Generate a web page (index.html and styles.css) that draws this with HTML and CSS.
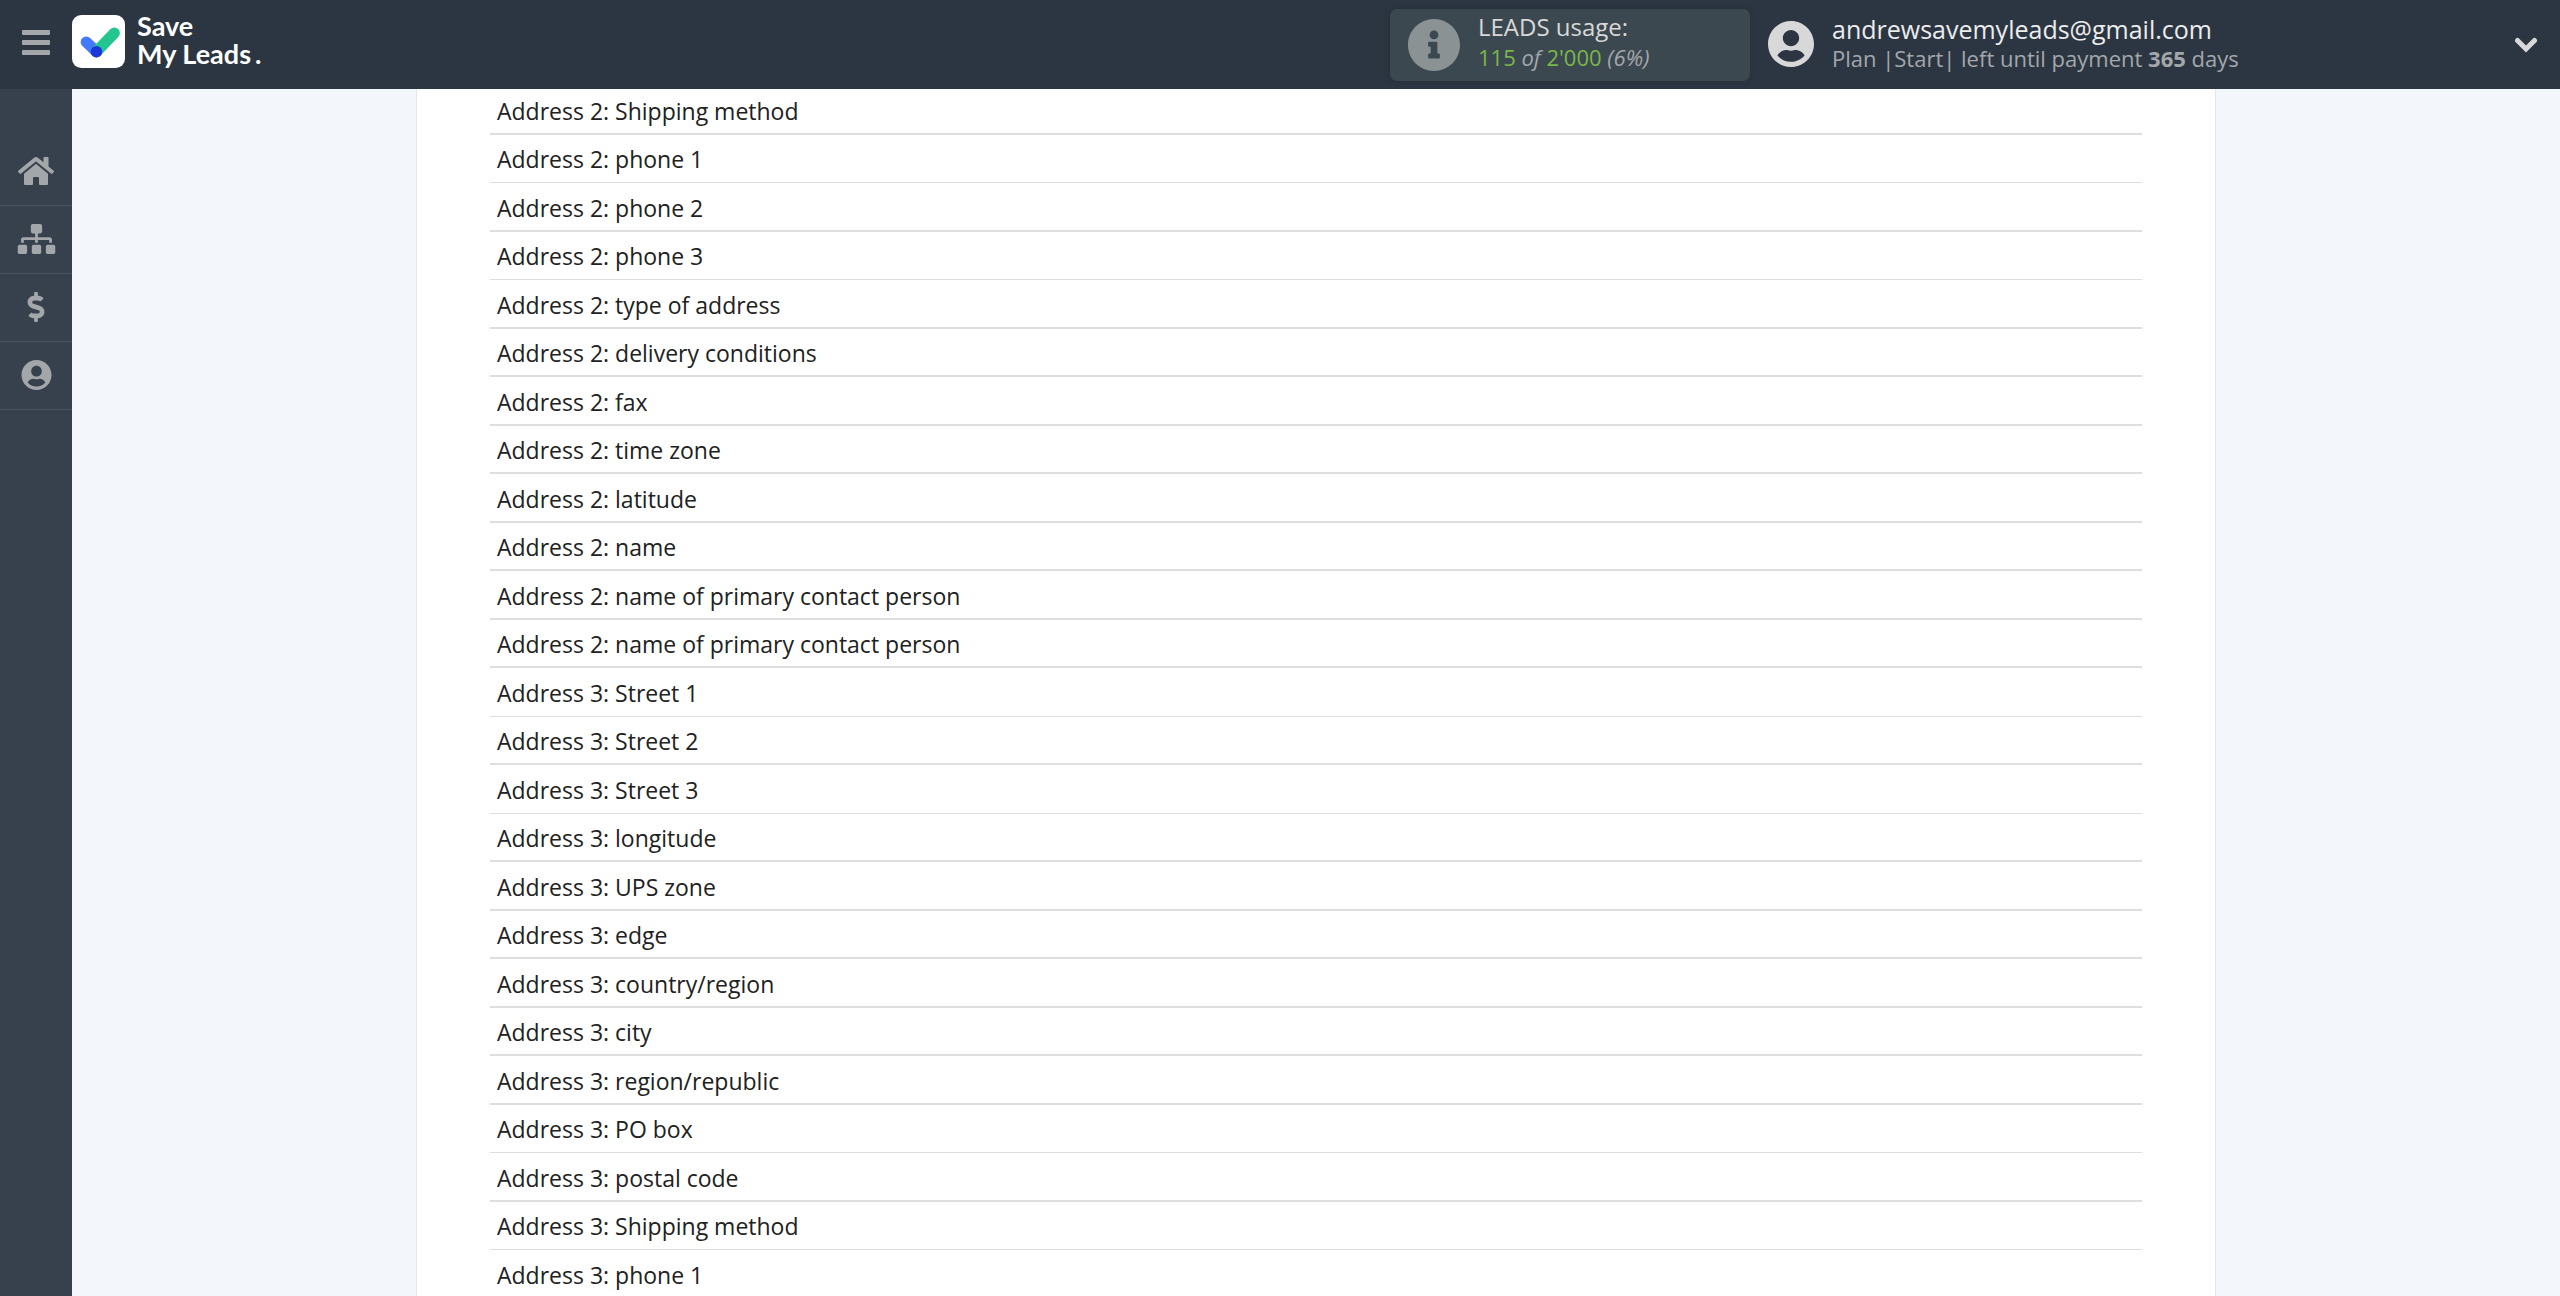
FILE: index.html
```html
<!DOCTYPE html>
<html lang="en">
<head>
    <meta charset="UTF-8">
    <meta name="viewport" content="width=device-width, initial-scale=1.0">
    <title>Save My Leads</title>
    <link rel="stylesheet" href="styles.css">
</head>
<body>
    <header class="topbar">
        <button class="menu-btn" aria-label="Menu">
            <span class="bar"></span>
            <span class="bar"></span>
            <span class="bar"></span>
        </button>
        <a class="logo" href="#">
            <svg class="logo-mark" viewBox="0 0 52 52">
                <rect width="52" height="52" rx="9" fill="#fff"/>
                <path d="M14 26.500L24 36" stroke="#4379ff" stroke-width="11" stroke-linecap="round"/>
                <path d="M24 36L41.500 17.800" stroke="#23c68e" stroke-width="11" stroke-linecap="round"/>
                <circle cx="24" cy="36" r="5.700" fill="#1b36d8"/>
            </svg>
            <span class="logo-text">Save<br>My Leads<span class="dot">.</span></span>
        </a>

        <div class="usage">
            <svg class="usage-icon" viewBox="8 8 496 496">
                <path fill="#8b9294" d="M256 8C119.043 8 8 119.083 8 256c0 136.997 111.043 248 248 248s248-111.003 248-248C504 119.083 392.957 8 256 8zm0 110c23.196 0 42 18.804 42 42s-18.804 42-42 42-42-18.804-42-42 18.804-42 42-42zm56 254c0 6.627-5.373 12-12 12h-88c-6.627 0-12-5.373-12-12v-24c0-6.627 5.373-12 12-12h12v-64h-12c-6.627 0-12-5.373-12-12v-24c0-6.627 5.373-12 12-12h64c6.627 0 12 5.373 12 12v100h12c6.627 0 12 5.373 12 12v24z"/>
            </svg>
            <div class="usage-info">
                <div class="usage-title">LEADS usage:</div>
                <div class="usage-count"><b>115</b> <i>of</i> <b>2'000</b> <i>(6%)</i></div>
            </div>
        </div>

        <div class="account">
            <svg class="account-icon" viewBox="0 8 496 496">
                <path fill="#d8d8d8" d="M248 8C111 8 0 119 0 256s111 248 248 248 248-111 248-248S385 8 248 8zm0 96c48.600 0 88 39.400 88 88s-39.400 88-88 88-88-39.400-88-88 39.400-88 88-88zm0 344c-58.700 0-111.300-26.600-146.500-68.200 18.800-35.400 55.600-59.800 98.500-59.800 2.400 0 4.800.4 7.100 1.100 13 4.200 26.600 6.900 40.900 6.900 14.300 0 28-2.700 40.900-6.900 2.300-.7 4.700-1.100 7.100-1.100 42.900 0 79.700 24.400 98.500 59.800C359.300 421.400 306.700 448 248 448z"/>
            </svg>
            <div>
                <div class="account-mail">andrewsavemyleads@gmail.com</div>
                <div class="account-plan">Plan |Start| left until payment <b>365</b> days</div>
            </div>
        </div>

        <button class="toggle-btn" aria-label="Account menu">
            <svg viewBox="0 0 24 16">
                <path d="M3.500 3.500L12 12L20.500 3.500" fill="none" stroke="#d8d8d8" stroke-width="5" stroke-linecap="round"/>
            </svg>
        </button>
    </header>

    <div class="page">
        <nav class="sidebar">
            <a href="#" aria-label="Home">
                <svg class="icon-home" viewBox="0 0 576 512"><path d="M280.370 148.260L96 300.110V464a16 16 0 0 0 16 16l112.060-.29a16 16 0 0 0 15.920-16V368a16 16 0 0 1 16-16h64a16 16 0 0 1 16 16v95.640a16 16 0 0 0 16 16.050L464 480a16 16 0 0 0 16-16V300L295.670 148.260a12.190 12.190 0 0 0-15.300 0zM571.600 251.470L488 182.560V44.050a12 12 0 0 0-12-12h-56a12 12 0 0 0-12 12v72.610L318.470 43a48 48 0 0 0-61 0L4.340 251.470a12 12 0 0 0-1.600 16.900l25.500 31A12 12 0 0 0 45.150 301l235.220-193.740a12.190 12.190 0 0 1 15.300 0L530.900 301a12 12 0 0 0 16.900-1.600l25.500-31a12 12 0 0 0-1.700-16.930z"/></svg>
            </a>
            <a href="#" aria-label="Connections">
                <svg class="icon-map" viewBox="0 0 640 512"><path d="M128 352H32c-17.670 0-32 14.330-32 32v96c0 17.670 14.330 32 32 32h96c17.670 0 32-14.330 32-32v-96c0-17.670-14.330-32-32-32zm-24-80h192v48h48v-48h192v48h48v-57.590c0-21.170-17.230-38.410-38.410-38.410H344v-64h40c17.670 0 32-14.330 32-32V32c0-17.670-14.330-32-32-32H256c-17.670 0-32 14.330-32 32v96c0 17.670 14.330 32 32 32h40v64H94.410C73.230 224 56 241.230 56 262.410V320h48v-48zm264 80h-96c-17.670 0-32 14.330-32 32v96c0 17.670 14.330 32 32 32h96c17.670 0 32-14.330 32-32v-96c0-17.670-14.330-32-32-32zm240 0h-96c-17.670 0-32 14.330-32 32v96c0 17.670 14.330 32 32 32h96c17.670 0 32-14.330 32-32v-96c0-17.670-14.330-32-32-32z"/></svg>
            </a>
            <a href="#" aria-label="Payments">
                <svg class="icon-pay" viewBox="0 0 288 512"><path d="M209.200 233.400l-108-31.600C88.700 198.200 80 186.500 80 173.500c0-16.300 13.200-29.500 29.500-29.500h66.300c12.200 0 24.200 3.700 34.200 10.500 6.100 4.100 14.300 3.100 19.500-2l34.800-34c7.100-6.900 6.100-18.400-1.800-24.500C238 74.800 207.400 64.100 176 64V16c0-8.800-7.200-16-16-16h-32c-8.800 0-16 7.200-16 16v48h-2.500C45.800 64-5.400 118.700.5 183.600c4.200 46.100 39.400 83.600 83.800 96.600l102.500 30c12.500 3.700 21.200 15.300 21.200 28.300 0 16.300-13.200 29.500-29.500 29.500h-66.300C100 368 88 364.300 78 357.500c-6.100-4.100-14.300-3.100-19.500 2l-34.800 34c-7.100 6.900-6.100 18.400 1.800 24.500 24.500 19.200 55.100 29.900 86.500 30v48c0 8.800 7.200 16 16 16h32c8.800 0 16-7.200 16-16v-48.200c46.600-.9 90.300-28.600 105.700-72.700 21.500-61.600-14.600-124.800-72.500-141.700z"/></svg>
            </a>
            <a href="#" aria-label="Profile">
                <svg class="icon-user" viewBox="0 8 496 496"><path d="M248 8C111 8 0 119 0 256s111 248 248 248 248-111 248-248S385 8 248 8zm0 96c48.600 0 88 39.400 88 88s-39.400 88-88 88-88-39.400-88-88 39.400-88 88-88zm0 344c-58.700 0-111.300-26.600-146.500-68.200 18.800-35.400 55.600-59.800 98.500-59.800 2.400 0 4.800.4 7.100 1.100 13 4.200 26.600 6.900 40.900 6.900 14.300 0 28-2.700 40.900-6.900 2.300-.7 4.700-1.100 7.100-1.100 42.900 0 79.700 24.400 98.500 59.800C359.300 421.400 306.700 448 248 448z"/></svg>
            </a>
        </nav>

        <main class="content">
            <div class="card">
                <table class="fields">
                    <tr><td>Address 2: Shipping method</td></tr>
                    <tr class="thin"><td>Address 2: phone 1</td></tr>
                    <tr><td>Address 2: phone 2</td></tr>
                    <tr class="thin"><td>Address 2: phone 3</td></tr>
                    <tr><td>Address 2: type of address</td></tr>
                    <tr><td>Address 2: delivery conditions</td></tr>
                    <tr><td>Address 2: fax</td></tr>
                    <tr><td>Address 2: time zone</td></tr>
                    <tr><td>Address 2: latitude</td></tr>
                    <tr><td>Address 2: name</td></tr>
                    <tr><td>Address 2: name of primary contact person</td></tr>
                    <tr><td>Address 2: name of primary contact person</td></tr>
                    <tr class="thin"><td>Address 3: Street 1</td></tr>
                    <tr><td>Address 3: Street 2</td></tr>
                    <tr class="thin"><td>Address 3: Street 3</td></tr>
                    <tr><td>Address 3: longitude</td></tr>
                    <tr><td>Address 3: UPS zone</td></tr>
                    <tr><td>Address 3: edge</td></tr>
                    <tr><td>Address 3: country/region</td></tr>
                    <tr><td>Address 3: city</td></tr>
                    <tr><td>Address 3: region/republic</td></tr>
                    <tr class="thin"><td>Address 3: PO box</td></tr>
                    <tr><td>Address 3: postal code</td></tr>
                    <tr class="thin"><td>Address 3: Shipping method</td></tr>
                    <tr><td>Address 3: phone 1</td></tr>
                </table>
            </div>
        </main>
    </div>
</body>
</html>
```
FILE: styles.css
```css
* {
    box-sizing: border-box;
}
body {
    margin: 0;
    height: 100vh;
    display: flex;
    flex-direction: column;
    overflow: hidden;
    font-family: "Open Sans", sans-serif;
    background-color: #f3f7fc;
    color: #212121;
}
button {
    background: none;
    border: none;
    padding: 0;
    cursor: pointer;
}
svg {
    display: block;
}

/* top bar */
.topbar {
    flex: none;
    height: 89px;
    display: flex;
    align-items: center;
    padding: 0 22px;
    background-color: #2b3642;
}
.menu-btn {
    width: 28px;
    display: flex;
    flex-direction: column;
    gap: 5px;
    margin-right: 22px;
    padding-bottom: 5px;
}
.bar {
    height: 5px;
    border-radius: 1px;
    background-color: #a3a7aa;
}
.logo {
    display: flex;
    align-items: center;
    gap: 12px;
    padding-bottom: 7px;
    color: white;
    text-decoration: none;
}
.logo-mark {
    width: 53px;
    height: 53px;
    fill: none;
}
.logo-text {
    font-family: "Lato", sans-serif;
    font-weight: bold;
    font-size: 27px;
    line-height: 28px;
    padding-bottom: 3px;
}
.dot {
    margin-left: 4px;
}
.usage {
    width: 360px;
    height: 72px;
    margin-left: auto;
    margin-right: 18px;
    padding-left: 18px;
    display: flex;
    align-items: center;
    gap: 18px;
    border-radius: 7px;
    background-color: #3c4850;
    box-shadow: 0 0 6px rgba(0, 0, 0, 0.15);
}
.usage-icon {
    width: 52px;
    height: 52px;
}
.usage-info {
    padding-bottom: 6px;
}
.usage-title {
    font-size: 24px;
    line-height: 30px;
    color: #d8d8d8;
}
.usage-count {
    font-size: 22px;
    line-height: 30px;
    color: #a3a7aa;
}
.usage-count b {
    font-weight: normal;
    color: #7ab648;
}
.account {
    width: 746px;
    display: flex;
    align-items: center;
    gap: 18px;
    padding-bottom: 2px;
}
.account-icon {
    width: 46px;
    height: 46px;
}
.account-mail {
    font-size: 25px;
    line-height: 29px;
    color: #ececec;
}
.account-plan {
    font-size: 22px;
    line-height: 29px;
    color: #a3a7aa;
}
.toggle-btn svg {
    width: 24px;
    height: 16px;
}

/* page */
.page {
    flex: 1;
    min-height: 0;
    display: flex;
}
.sidebar {
    flex: none;
    width: 72px;
    padding-top: 49px;
    background-color: #36414d;
}
.sidebar a {
    height: 68px;
    display: flex;
    align-items: center;
    justify-content: center;
    padding-bottom: 2px;
    border-bottom: 1px solid #4a5560;
}
.sidebar svg {
    height: 30px;
    fill: #a3a7aa;
}
.sidebar .icon-home {
    width: 36px;
    height: 32px;
}
.icon-map {
    width: 39px;
}
.icon-pay {
    width: 18px;
}
.icon-user {
    width: 31px;
}
.content {
    flex: 1;
    display: flex;
    justify-content: center;
    align-items: flex-start;
}
.card {
    width: 1800px;
    max-width: 100%;
    padding: 0 73px;
    background-color: white;
    border: 1px solid #e3e6ea;
    border-top: none;
}
.fields {
    width: 100%;
    border-spacing: 0;
}
.fields td {
    height: 48px;
    padding: 0 7px 6px;
    font-size: 23px;
    line-height: 32px;
    vertical-align: bottom;
    border-bottom: 2px solid #dedede;
}
.fields tr:nth-child(odd) td {
    height: 49px;
}
.fields tr:first-child td {
    height: 46px;
}
.fields .thin td {
    padding-bottom: 7px;
    border-bottom-width: 1px;
}
```
